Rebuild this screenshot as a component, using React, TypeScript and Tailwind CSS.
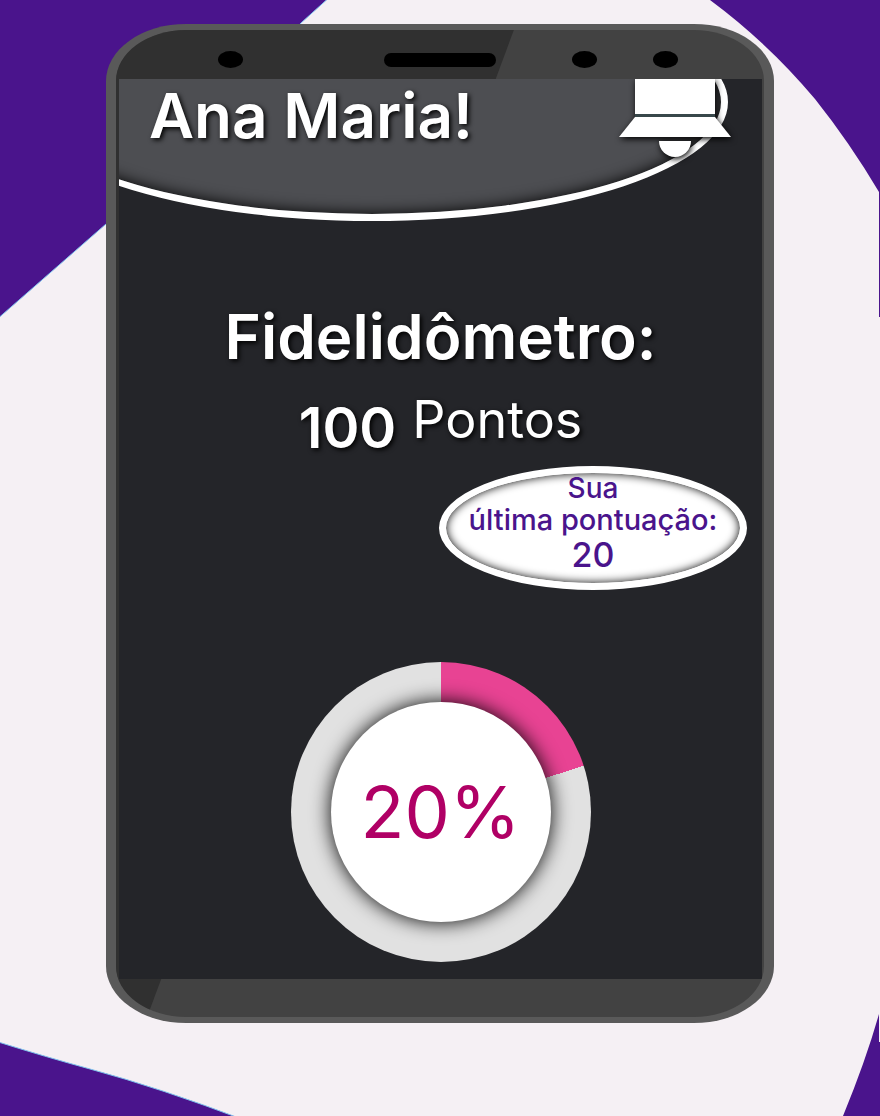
const SHADOW = "[text-shadow:2px_2px_5px_#000]";

function Backdrop() {
  return (
    <svg
      className="absolute inset-0 h-full w-full"
      viewBox="0 0 880 1116"
      preserveAspectRatio="none"
      aria-hidden="true"
    >
      <g fill="#4a148c">
        <path d="M-5 -5H332L301 23Q200 138 106 224L-5 321Z" stroke="#7fc4ee" strokeWidth="1" />
        <path d="M710 0H880V317H879V192Q850 143 815 99Q768 43 710 0Z" />
        <path d="M-5 1041Q46 1057 90 1069Q160 1088 247 1121H-5Z" stroke="#7fc4ee" strokeWidth="1" />
        <path d="M843 1116Q866 1060 879 1014V1042H880V1116Z" />
      </g>
    </svg>
  );
}

function Sensors() {
  return (
    <div className="flex h-[49px] items-center justify-end pt-[10px] pr-[84px]">
      <span className="h-[17px] w-[25px] rounded-[50%] bg-black" />
      <span className="ml-[141px] h-[14px] w-[112px] rounded-full bg-black" />
      <span className="ml-[76px] h-[17px] w-[25px] rounded-[50%] bg-black" />
      <span className="ml-[56px] h-[17px] w-[25px] rounded-[50%] bg-black" />
    </div>
  );
}

function BellIcon() {
  return (
    <svg
      width="112"
      height="78"
      viewBox="0 0 112 78"
      fill="#fff"
      className="overflow-visible [filter:drop-shadow(1px_2px_3px_#000)]"
      aria-hidden="true"
    >
      <path d="M16 0H96V35H16Z" />
      <path d="M16 38H96L112 58H0Z" />
      <path d="M40 62H72A16 16 0 0 1 40 62Z" />
      <path d="M16 35H96V38H16Z" fill="#38474a" />
    </svg>
  );
}

function Header() {
  return (
    <header className="relative h-[142px]">
      <div className="absolute -top-24 -left-[103px] h-[238px] w-[712px] rounded-[50%] border-[7px] border-white bg-[#4d4e52] shadow-[inset_0_0_15px_#000]" />
      <div className="relative flex items-start justify-between pr-[31px] pl-[30px]">
        <h1 className={`text-[62px] leading-[74px] font-semibold text-white ${SHADOW}`}>
          Ana Maria!
        </h1>
        <button type="button" aria-label="Notificações">
          <BellIcon />
        </button>
      </div>
    </header>
  );
}

function ProgressRing({ value }: { value: number }) {
  return (
    <div
      role="img"
      aria-label={`${value}%`}
      className="mx-auto flex size-[300px] items-center justify-center rounded-full"
      style={{ background: `conic-gradient(#e84393 ${value}%, #e1e1e1 0)` }}
    >
      <div className="flex size-[220px] items-center justify-center rounded-full bg-white shadow-[0_0_20px_#000]">
        <span className="text-[72px] leading-none text-[#b00065]">{value}%</span>
      </div>
    </div>
  );
}

export default function App() {
  return (
    <div className="relative min-h-screen overflow-hidden bg-[#f5f0f4] px-[106px] pt-6 pb-[93px] font-['Inter',sans-serif]">
      <Backdrop />
      <div className="relative overflow-hidden rounded-[80px/57px] bg-[#595959] px-[10px] py-[6px]">
        <div className="relative overflow-hidden rounded-[70px/51px] bg-[#424242] pr-[2px] pb-[38px] pl-[3px]">
          <div className="absolute inset-0 bg-[#303030] [clip-path:polygon(0_0,61.4%_0,4.8%_100%,0_100%)]" />
          <div className="relative">
            <Sensors />
            <main className="flex min-h-[900px] flex-col overflow-hidden bg-[#242529] pb-[17px]">
              <Header />
              <section className="mt-[80px] flex flex-col">
                <h2 className={`text-center text-[62px] leading-[72px] font-semibold text-white ${SHADOW}`}>
                  Fidelidômetro:
                </h2>
                <p className={`mt-[19px] flex items-start justify-center gap-4 text-white ${SHADOW}`}>
                  <strong className="text-[56px] leading-[72px] font-semibold">100</strong>
                  <span className="text-[52px] leading-[56px]">Pontos</span>
                </p>
                <div className="mt-[2px] mr-[15px] flex h-[124px] w-[308px] flex-col items-center self-end rounded-[50%] border-[7px] border-white bg-white text-center font-medium text-[#4a148c] shadow-[inset_0_0_10px_#000]">
                  <span className="text-[28px] leading-[30px]">Sua</span>
                  <span className="text-[29px] leading-[34px] whitespace-nowrap">última pontuação:</span>
                  <span className="text-[34px] leading-[36px]">20</span>
                </div>
              </section>
              <div className="mt-[72px]">
                <ProgressRing value={20} />
              </div>
            </main>
          </div>
        </div>
      </div>
    </div>
  );
}
